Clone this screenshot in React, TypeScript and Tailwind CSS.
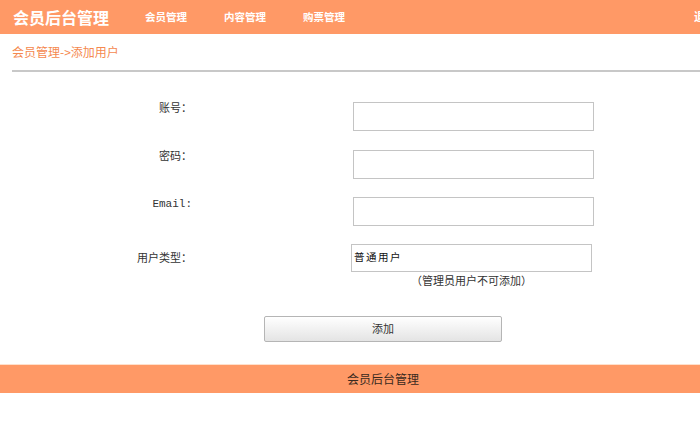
const navItems = ['会员管理', '内容管理', '购票管理'];

const fields = [
  { label: '账号：' },
  { label: '密码：' },
  { label: 'Email:' },
];

export default function App() {
  return (
    <div className="relative h-[444px] w-[700px] overflow-hidden bg-white font-['Noto_Sans_CJK_SC',sans-serif] text-[#333]">
      {/* top bar */}
      <header className="flex h-[34px] items-center bg-[#ff9966] text-white">
        <h1 className="ml-[13px] w-[132px] text-[16px] font-bold leading-none">会员后台管理</h1>
        <nav className="flex gap-[37px] text-[10.5px] font-bold">
          {navItems.map((item) => (
            <a key={item} href="#" className="leading-none">{item}</a>
          ))}
        </nav>
        <span className="absolute left-[694px] top-[11px] whitespace-nowrap text-[11px] font-bold leading-none">退出</span>
      </header>

      {/* breadcrumb */}
      <div className="ml-[12px] border-b-2 border-[#c8c8c8] pb-[11px] pt-[11px] text-[12px] leading-[14px] text-[#f5894f]">
        会员管理-&gt;添加用户
      </div>

      {/* form */}
      <form className="pt-[28px]">
        {fields.map((f) => (
          <div key={f.label} className="flex h-[47.5px] items-start">
            <label className="w-[192px] pt-[3px] text-right font-['Liberation_Mono','Noto_Sans_CJK_SC',monospace] text-[11px] leading-[12px] text-[#333]">
              {f.label}
            </label>
            <input
              type="text"
              className="ml-[161px] mt-[2px] h-[29px] w-[241px] border border-[#c4c4c4] bg-white px-1 text-[12px] outline-none"
            />
          </div>
        ))}
        <div className="flex items-start">
          <label className="w-[192px] pt-[8px] text-right text-[11px] leading-[12px] text-[#333]">用户类型：</label>
          <div className="ml-[159px] mt-[1px] flex flex-col items-center">
            <div className="flex h-[28px] w-[241px] items-center border border-[#c4c4c4] pl-[2px] text-[10.5px] leading-none tracking-[1.5px] text-[#111]">
              普通用户
            </div>
            <p className="mt-[1px] text-[11px] leading-[14px] text-[#333]">（管理员用户不可添加）</p>
          </div>
        </div>
        <div className="mt-[29px] flex">
          <button
            type="button"
            className="ml-[264px] h-[26px] w-[238px] rounded-[2px] border border-[#b5b5b5] bg-gradient-to-b from-white to-[#e4e4e4] text-[11px] text-[#333]"
          >
            添加
          </button>
        </div>
      </form>

      {/* footer */}
      <footer className="mt-[22px] flex h-[29px] items-center border-t border-[#ffe0cc] bg-[#ff9966] pl-[347px] text-[12px] text-[#3a2a20]">
        会员后台管理
      </footer>
    </div>
  );
}
